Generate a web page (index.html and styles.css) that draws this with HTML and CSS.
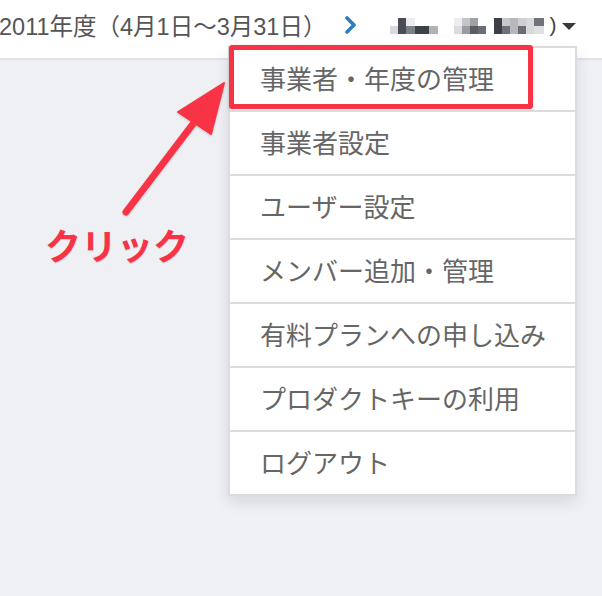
FILE: index.html
```
<html>
<head>
<meta charset="utf-8">
<title>事業者・年度の管理</title>
<link rel="stylesheet" href="styles.css">
</head>
<body>

<div class="header">
  <span class="period">2011年度（4月1日〜3月31日）</span>
  <svg class="chevron" width="14" height="18" viewBox="0 0 14 18">
    <polyline points="3,2 10,9 3,16" fill="none" stroke="#2e7cc0" stroke-width="3.6" stroke-linecap="round" stroke-linejoin="round"/>
  </svg>
  <span class="user">
    <!-- account name, pixelated -->
    <svg class="mosaic" width="155" height="16" viewBox="0 0 155 16">
      <rect x="0" y="8" width="8" height="8" fill="#d9d9dd"/>
      <rect x="8" y="0" width="8" height="16" fill="#4a4d55"/>
      <rect x="16" y="0" width="9" height="8" fill="#ececee"/>
      <rect x="16" y="8" width="9" height="8" fill="#7d8088"/>
      <rect x="25" y="8" width="14" height="8" fill="#3e4148"/>
      <rect x="39" y="8" width="9" height="8" fill="#b0b2b8"/>

      <rect x="64" y="0" width="8" height="8" fill="#ededef"/>
      <rect x="64" y="8" width="8" height="8" fill="#dcdcdf"/>
      <rect x="72" y="0" width="8" height="8" fill="#c4c5c9"/>
      <rect x="72" y="8" width="8" height="8" fill="#9a9ca2"/>
      <rect x="80" y="0" width="8" height="8" fill="#a0a1a7"/>
      <rect x="80" y="8" width="8" height="8" fill="#5a5d63"/>
      <rect x="88" y="8" width="8" height="8" fill="#6a6d73"/>

      <rect x="104" y="0" width="8" height="16" fill="#3c3f46"/>
      <rect x="112" y="0" width="8" height="8" fill="#c8c8cc"/>
      <rect x="112" y="8" width="8" height="8" fill="#6e7178"/>
      <rect x="120" y="0" width="8" height="16" fill="#b8b8bc"/>
      <rect x="128" y="0" width="8" height="8" fill="#cfcfd2"/>
      <rect x="128" y="8" width="8" height="8" fill="#6a6d73"/>
      <rect x="136" y="0" width="8" height="16" fill="#d8d8db"/>
      <rect x="144" y="0" width="10" height="8" fill="#707379"/>
      <rect x="144" y="8" width="10" height="8" fill="#e0e0e2"/>
    </svg><span class="paren">)</span>
  </span>
  <svg class="caret" width="14" height="8" viewBox="0 0 14 8">
    <polygon points="0,0 14,0 7,7" fill="#3a3a3a"/>
  </svg>
</div>

<div class="menu">
  <div class="menuItem">事業者・年度の管理<span class="highlight"></span></div>
  <div class="menuItem">事業者設定</div>
  <div class="menuItem">ユーザー設定</div>
  <div class="menuItem">メンバー追加・管理</div>
  <div class="menuItem">有料プランへの申し込み</div>
  <div class="menuItem">プロダクトキーの利用</div>
  <div class="menuItem">ログアウト</div>
</div>

<svg class="arrow" width="130" height="160" viewBox="110 70 130 160">
  <line x1="126" y1="212" x2="196" y2="120" stroke="#f93346" stroke-width="7" stroke-linecap="round"/>
  <polygon points="224,83 178,112 211,134" fill="#f93346" stroke="#f93346" stroke-width="2" stroke-linejoin="round"/>
</svg>

<div class="label">クリック</div>

</body>
</html>
```
FILE: styles.css
```
body {
  margin: 0;
  width: 602px;
  height: 596px;
  overflow: hidden;
  position: relative;
  background-color: #eff0f4;
  font-family: "Liberation Sans", "Noto Sans CJK JP", sans-serif;
}

.header {
  height: 49px;
  padding-bottom: 9px;
  background-color: #ffffff;
  border-bottom: 2px solid #e2e2e4;
  display: flex;
  align-items: center;
  color: #555555;
  font-size: 23.5px;
  white-space: nowrap;
}

.period {
  margin-left: -1px;
}

.chevron {
  margin-left: 18px;
}

.user {
  display: flex;
  align-items: center;
  margin-left: 32px;
}

.mosaic {
  margin-top: 2px;
}

.paren {
  margin-left: 4px;
  font-size: 21px;
  color: #444444;
}

.caret {
  margin-left: 6px;
  margin-top: 4px;
}

.menu {
  position: absolute;
  left: 228px;
  top: 46px;
  width: 349px;
  box-sizing: border-box;
  background-color: #ffffff;
  border: 2px solid #dcdcdc;
  box-shadow: 0 6px 14px rgba(0, 0, 0, 0.10);
  font-family: "Noto Sans CJK JP", sans-serif;
}

.menuItem {
  height: 58px;
  padding-bottom: 4px;
  display: flex;
  align-items: center;
  padding-left: 30px;
  font-size: 26px;
  color: #666666;
  border-top: 2px solid #dcdcdc;
  position: relative;
}

.menuItem:first-child {
  border-top: none;
}

.highlight {
  position: absolute;
  left: -1px;
  top: -3px;
  width: 304px;
  height: 64px;
  box-sizing: border-box;
  border: 5px solid #f93346;
  border-radius: 3px;
  box-shadow: 0 1px 3px rgba(0, 0, 0, 0.15);
}

.arrow {
  position: absolute;
  left: 110px;
  top: 70px;
  filter: drop-shadow(0 1px 1px rgba(0, 0, 0, 0.18));
}

.label {
  position: absolute;
  left: 45px;
  top: 224px;
  font-family: "Noto Sans CJK JP", sans-serif;
  font-weight: bold;
  font-size: 36px;
  line-height: 40px;
  color: #f93346;
  text-shadow: 0 1px 1px rgba(0, 0, 0, 0.15);
}
```
